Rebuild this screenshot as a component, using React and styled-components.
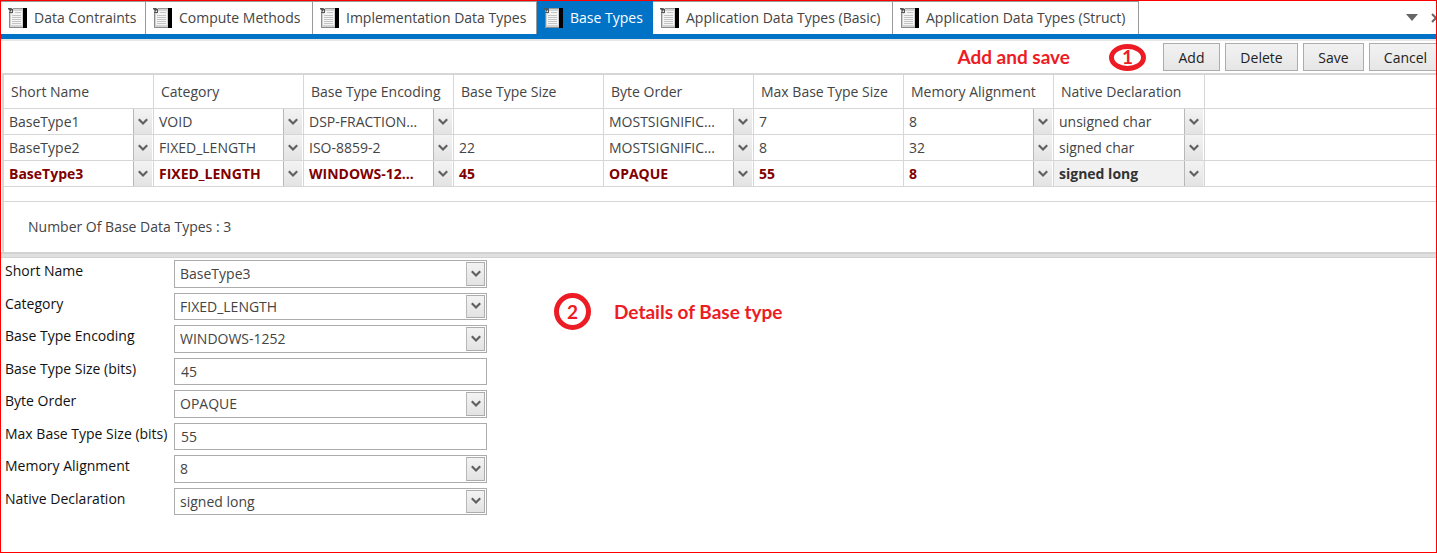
import React from "react";
import styled, { createGlobalStyle, css } from "styled-components";

const GlobalStyle = createGlobalStyle`
  *, *::before, *::after { box-sizing: border-box; }
  body { margin: 0; background: #fff; }
  body, button, input, select { font-family: "Open Sans", "Noto Sans", sans-serif; font-size: 14px; }
`;

const line = "#d6d6d6";
const blue = "#0173c7";
const red = "#ed1c24";

const Window = styled.main`
  display: flex;
  flex-direction: column;
  min-height: 100vh;
  border: 1px solid #ff0000;
  overflow: hidden;
  color: #444;
`;

const TabBar = styled.nav`
  display: flex;
  align-items: stretch;
  height: 38px;
  border-bottom: 5px solid ${blue};
  white-space: nowrap;
`;

const Tab = styled.button`
  display: flex;
  align-items: center;
  gap: 7px;
  flex: 0 0 auto;
  width: ${(p) => p.$width}px;
  padding: 0 0 1px 7px;
  border: 0;
  border-top: 1px solid #999;
  border-right: 1px solid #999;
  background: #fff;
  color: #444;
  ${(p) => p.$active && css`
    border-color: ${blue};
    background: ${blue};
    color: #fff;
  `}
`;

const TabTools = styled.div`
  display: flex;
  align-items: center;
  gap: 13px;
  margin: 0 -7px 0 auto;
`;

const IconButton = styled.button`
  display: flex;
  padding: 0;
  border: 0;
  background: none;
`;

const Toolbar = styled.div`
  display: flex;
  align-items: center;
  justify-content: flex-end;
  gap: 5px;
  height: 34px;
  margin-right: -6px;
  border-top: 2px solid #e6e6e6;
`;

const ToolButton = styled.button`
  width: ${(p) => p.$width}px;
  height: 28px;
  padding: 0;
  border: 1px solid #acacac;
  background: linear-gradient(#f2f2f2, #e6e6e6);
  color: #222;
`;

const Note = styled.strong`
  display: flex;
  align-items: center;
  gap: ${(p) => p.$gap}px;
  margin-right: ${(p) => p.$after || 0}px;
  color: ${red};
  font-family: Lato, sans-serif;
  font-size: 19px;
  line-height: 24px;
`;

const Marker = styled.span`
  display: flex;
  align-items: center;
  justify-content: center;
  width: 37px;
  height: ${(p) => p.$height}px;
  border: 5px solid ${red};
  border-radius: 50%;
`;

const GridPanel = styled.section`
  margin-left: 1px;
  border-top: 2px solid ${line};
  border-left: 2px solid ${line};
`;

const Table = styled.table`
  width: 100%;
  table-layout: fixed;
  border-collapse: separate;
  border-spacing: 0;

  th, td {
    padding: 0;
    border-right: 1px solid ${line};
    border-bottom: 1px solid ${line};
    text-align: left;
    white-space: nowrap;
  }
  th:last-child, td:last-child { border-right: 0; }
  th {
    height: 34px;
    padding-left: 7px;
    font-weight: 400;
  }
`;

const Col = styled.col`
  width: ${(p) => p.$width}px;
`;

const CellText = styled.span`
  padding-left: 5px;
`;

const Picker = styled.div`
  position: relative;
  height: ${(p) => (p.$boxed ? "100%" : "25px")};
  border: ${(p) => (p.$boxed ? "1px solid #acacac" : "0")};
  background: ${(p) => (p.$focused ? "#f1f1f1" : "#fff")};
`;

const Select = styled.select`
  display: block;
  appearance: none;
  width: 100%;
  height: 100%;
  padding: 0 ${(p) => (p.$boxed ? 24 : 35)}px 0 5px;
  border: 0;
  border-radius: 0;
  outline: 0;
  background: none;
  color: ${(p) => (p.$focused ? "#333" : "inherit")};
  font-weight: inherit;
  text-overflow: ellipsis;
`;

const Row = styled.tr`
  height: 26px;
  color: #444;
  ${(p) => p.$selected && css`
    color: #800000;
    font-weight: 700;
    ${Select} { padding-right: 38px; }
  `}
`;

const Arrow = styled.span`
  position: absolute;
  top: ${(p) => (p.$boxed ? 1 : 0)}px;
  right: 1px;
  bottom: ${(p) => (p.$boxed ? 1 : 0)}px;
  display: flex;
  align-items: center;
  justify-content: center;
  width: 19px;
  border: ${(p) => (p.$boxed ? "1px solid #acacac" : "0")};
  border-left: 1px solid #b8b8b8;
  background: linear-gradient(#f3f3f3, #e3e3e3);
  pointer-events: none;
`;

const Summary = styled.p`
  height: 51px;
  margin: 14px 0 0;
  padding-left: 24px;
  border-top: 1px solid ${line};
  line-height: 50px;
`;

const Splitter = styled.div`
  height: 6px;
  border-top: 2px solid #d2d2d2;
  border-bottom: 1px solid #d2d2d2;
  background: #e0e0e0;
`;

const Details = styled.section`
  display: flex;
  align-items: flex-start;
  gap: 67px;
  padding: 2px 0 36px 4px;
`;

const Form = styled.form`
  display: grid;
  grid-template-columns: 169px 313px;
  grid-auto-rows: 1fr;
  row-gap: 5px;
  height: 255px;
`;

const Label = styled.label`
  color: #111;
  line-height: 22px;
  white-space: nowrap;
`;

const TextBox = styled.input`
  width: 100%;
  height: 100%;
  padding: 0 0 0 6px;
  border: 1px solid #acacac;
  border-radius: 0;
  color: #444;
`;

const DetailsNote = styled.div`
  padding-top: 33px;
`;

function PageIcon() {
  return (
    <svg width="19" height="20" viewBox="0 0 19 20" aria-hidden="true">
      <rect x="15" width="4" height="20" fill="#000" />
      <path d="M1 1H15V20H1Z" fill="#d2d2d2" />
      <path d="M1.5 6V19.5H15" fill="none" stroke="#8a8a8a" />
      <path d="M5 .5H15" stroke="#999" />
      <path d="M5 3H14V17H3V7Z" fill="#f4f4f4" />
      <path d="M7 4.5H13M4 7.5H13M4 9.5H13M4 11.5H13M4 13.5H13M4 15.5H13" stroke="#c4c4c4" />
      <path d="M0 0H3L5 1V5H2L1 6V4L2 3L0 1Z" fill="#555" />
      <path d="M2 4L4 2V4Z" fill="#e8e8e8" />
    </svg>
  );
}

function Chevron() {
  return (
    <svg width="10" height="8" viewBox="0 0 10 8" aria-hidden="true">
      <path d="M.8 1.3L5 5.5L9.2 1.3" fill="none" stroke="#606060" strokeWidth="2.2" />
    </svg>
  );
}

function Dropdown({ value, boxed, focused, ...rest }) {
  return (
    <Picker $boxed={boxed} $focused={focused}>
      <Select $boxed={boxed} $focused={focused} defaultValue={value} {...rest}>
        <option>{value}</option>
      </Select>
      <Arrow $boxed={boxed}><Chevron /></Arrow>
    </Picker>
  );
}

const tabs = [
  ["Data Contraints", 145],
  ["Compute Methods", 167],
  ["Implementation Data Types", 224],
  ["Base Types", 116],
  ["Application Data Types (Basic)", 240],
  ["Application Data Types (Struct)", 246],
];

const columns = [
  { name: "Short Name", pick: true },
  { name: "Category", pick: true },
  { name: "Base Type Encoding", pick: true },
  { name: "Base Type Size" },
  { name: "Byte Order", pick: true },
  { name: "Max Base Type Size" },
  { name: "Memory Alignment", pick: true },
  { name: "Native Declaration", pick: true, width: 151 },
];

const rows = [
  ["BaseType1", "VOID", "DSP-FRACTIONAL", "", "MOSTSIGNIFICANTBYTEFIRST", "7", "8", "unsigned char"],
  ["BaseType2", "FIXED_LENGTH", "ISO-8859-2", "22", "MOSTSIGNIFICANTBYTEFIRST", "8", "32", "signed char"],
  ["BaseType3", "FIXED_LENGTH", "WINDOWS-1252", "45", "OPAQUE", "55", "8", "signed long"],
];

const fields = [
  ["Short Name", "BaseType3", true],
  ["Category", "FIXED_LENGTH", true],
  ["Base Type Encoding", "WINDOWS-1252", true],
  ["Base Type Size (bits)", "45", false],
  ["Byte Order", "OPAQUE", true],
  ["Max Base Type Size (bits)", "55", false],
  ["Memory Alignment", "8", true],
  ["Native Declaration", "signed long", true],
];

export default function App() {
  return (
    <Window>
      <GlobalStyle />
      <TabBar>
        {tabs.map(([name, width]) => (
          <Tab key={name} type="button" $width={width} $active={name === "Base Types"}>
            <PageIcon />
            {name}
          </Tab>
        ))}
        <TabTools>
          <IconButton type="button" aria-label="Open tabs">
            <svg width="12" height="7" viewBox="0 0 12 7"><path d="M0 0H12L6 7Z" fill="#666" /></svg>
          </IconButton>
          <IconButton type="button" aria-label="Close tab">
            <svg width="12" height="10" viewBox="0 0 12 10">
              <path d="M1 1L9 9M9 1L1 9" stroke="#666" strokeWidth="2" />
            </svg>
          </IconButton>
        </TabTools>
      </TabBar>

      <Toolbar>
        <Note $gap={39} $after={12}>
          Add and save
          <Marker $height={27}>1</Marker>
        </Note>
        <ToolButton type="button" $width={57}>Add</ToolButton>
        <ToolButton type="button" $width={73}>Delete</ToolButton>
        <ToolButton type="button" $width={61}>Save</ToolButton>
        <ToolButton type="button" $width={73}>Cancel</ToolButton>
      </Toolbar>

      <GridPanel>
        <Table>
          <colgroup>
            {columns.map((c) => <Col key={c.name} $width={c.width || 150} />)}
            <col />
          </colgroup>
          <thead>
            <tr>
              {columns.map((c) => <th key={c.name} scope="col">{c.name}</th>)}
              <td />
            </tr>
          </thead>
          <tbody>
            {rows.map((row, r) => (
              <Row key={row[0]} $selected={r === 2}>
                {row.map((value, i) => (
                  <td key={columns[i].name}>
                    {columns[i].pick ? (
                      <Dropdown
                        value={value}
                        focused={r === 2 && i === 7}
                        aria-label={`${columns[i].name} of ${row[0]}`}
                      />
                    ) : (
                      <CellText>{value}</CellText>
                    )}
                  </td>
                ))}
                <td />
              </Row>
            ))}
          </tbody>
        </Table>
        <Summary>Number Of Base Data Types : 3</Summary>
      </GridPanel>

      <Splitter />

      <Details>
        <Form>
          {fields.map(([name, value, pick], i) => (
            <React.Fragment key={name}>
              <Label htmlFor={`field-${i}`}>{name}</Label>
              {pick ? (
                <Dropdown id={`field-${i}`} value={value} boxed />
              ) : (
                <TextBox id={`field-${i}`} defaultValue={value} />
              )}
            </React.Fragment>
          ))}
        </Form>
        <DetailsNote>
          <Note $gap={23}>
            <Marker $height={37}>2</Marker>
            Details of Base type
          </Note>
        </DetailsNote>
      </Details>
    </Window>
  );
}
